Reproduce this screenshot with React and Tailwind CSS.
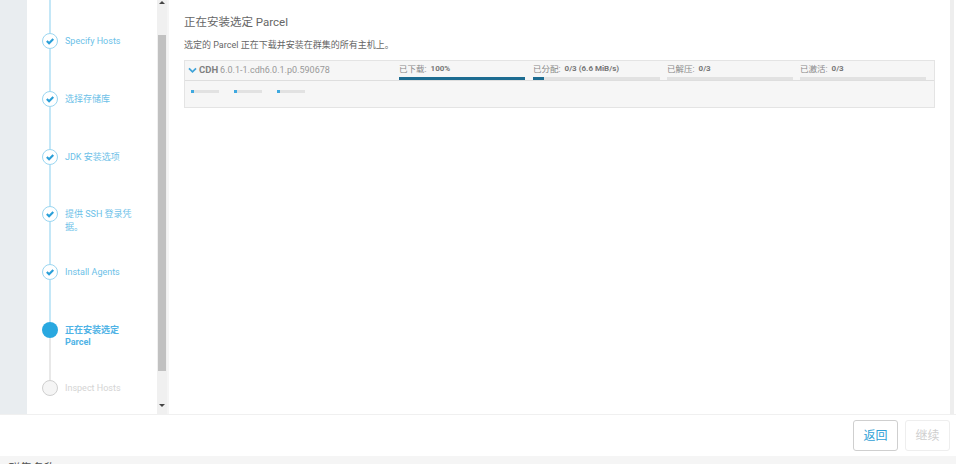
const completed = ["Specify Hosts", "选择存储库", "JDK 安装选项", "提供 SSH 登录凭据。", "Install Agents"];

function CheckStep({ label }) {
  return (
    <div className="flex h-[57.8px]">
      <div className="flex w-4 flex-col items-center">
        <div className="flex h-4 w-4 shrink-0 items-center justify-center rounded-full border border-[#9ad6f1] bg-white">
          <svg viewBox="0 0 12 12" className="h-[10px] w-[10px]" fill="none" stroke="#2a9fd8" strokeWidth="2.6">
            <path d="M2.2 6 L4.9 8.6 L9.9 3.6" />
          </svg>
        </div>
        <div className="w-0.5 flex-1 bg-[#c4e7f7]" />
      </div>
      <div className="ml-[7px] w-[68px] pt-[2px] text-[9px] leading-[12.5px] text-[#6cbfe8]">{label}</div>
    </div>
  );
}

function ProgressCol({ label, value, percent, width }) {
  return (
    <div className={width}>
      <div className="flex h-[16px] items-center gap-[4px] text-[8.5px] text-[#888]">
        <span>{label}</span>
        <span className="text-[8px] font-bold text-[#777]">{value}</span>
      </div>
      <div className="h-[3px] bg-[#e2e2e2]">
        <div className="h-full bg-[#1d6c91]" style={{ width: `${percent}%` }} />
      </div>
    </div>
  );
}

export default function App() {
  return (
    <div
      className="flex h-[464px] w-[956px] flex-col overflow-hidden bg-white"
      style={{ fontFamily: 'Roboto, "Noto Sans CJK SC", sans-serif' }}
    >
      <div className="flex h-[414px] shrink-0">
        <div className="w-[27px] shrink-0 bg-[#e9edf0]" />

        {/* Wizard steps */}
        <div className="w-[130px] shrink-0 bg-white pl-[15px]">
          <div className="ml-[7px] h-[33px] w-0.5 bg-[#c4e7f7]" />
          {completed.map((s) => (
            <CheckStep key={s} label={s} />
          ))}
          <div className="flex h-[57.8px]">
            <div className="flex w-4 flex-col items-center">
              <div className="h-4 w-4 shrink-0 rounded-full bg-[#29a8e0]" />
              <div className="w-0.5 flex-1 bg-[#e8e8e8]" />
            </div>
            <div className="ml-[7px] w-[62px] pt-[2px] text-[9px] font-bold leading-[12.5px] text-[#4fb3e6]">
              正在安装选定 Parcel
            </div>
          </div>
          <div className="flex">
            <div className="h-4 w-4 rounded-full border border-[#cfcfcf] bg-[#f5f5f5]" />
            <div className="ml-[7px] pt-[2px] text-[9px] leading-[12.5px] text-[#d4d4d4]">Inspect Hosts</div>
          </div>
        </div>

        {/* Scrollbar */}
        <div className="flex w-[10px] shrink-0 flex-col items-center bg-[#f0f0f0]">
          <div className="mt-[1px] h-0 w-0 border-x-[3px] border-b-[3px] border-x-transparent border-b-[#444]" />
          <div className="mt-[31px] h-[336px] w-2 shrink-0 bg-[#c1c1c1]" />
          <div className="mt-[33px] h-0 w-0 border-x-[3px] border-t-[3px] border-x-transparent border-t-[#444]" />
        </div>
        <div className="w-0.5 shrink-0 bg-[#f5f5f5]" />

        {/* Main */}
        <div className="w-[781px] shrink-0 bg-white px-[15px] pt-[14px]">
          <h1 className="text-[11.5px] font-normal leading-[16px] text-[#666]">正在安装选定 Parcel</h1>
          <p className="mt-[9px] text-[9px] leading-[12px] text-[#666]">选定的 Parcel 正在下载并安装在群集的所有主机上。</p>
          <div className="mt-[9px] h-[48px] w-[751px] border border-[#e4e4e4] bg-[#f6f6f6]">
            <div className="flex h-[20px] border-b border-[#dedede]">
              <div className="flex w-[214px] shrink-0 items-center pl-[3px] text-[9px] text-[#999]">
                <svg viewBox="0 0 10 8" className="mr-[2px] h-[7px] w-[9px]" fill="none" stroke="#3fa3d8" strokeWidth="2">
                  <path d="M1 1.5 L5 5.5 L9 1.5" />
                </svg>
                <span className="mr-[2px] text-[9.5px] font-bold text-[#808080]">CDH</span>
                6.0.1-1.cdh6.0.1.p0.590678
              </div>
              <ProgressCol label="已下载:" value="100%" percent={100} width="w-[126px] shrink-0" />
              <div className="w-2 shrink-0" />
              <ProgressCol label="已分配:" value="0/3 (6.6 MiB/s)" percent={9} width="w-[127px] shrink-0" />
              <div className="w-[7px] shrink-0" />
              <ProgressCol label="已解压:" value="0/3" percent={0} width="w-[126px] shrink-0" />
              <div className="w-[7px] shrink-0" />
              <ProgressCol label="已激活:" value="0/3" percent={0} width="w-[126px] shrink-0" />
            </div>
            <div className="flex gap-[15px] pl-[6px] pt-[9px]">
              {[0, 1, 2].map((i) => (
                <div key={i} className="h-[3px] w-[28px] bg-[#e2e2e2]">
                  <div className="h-full w-[3px] bg-[#3fa9e0]" />
                </div>
              ))}
            </div>
          </div>
        </div>
        <div className="w-1 shrink-0 bg-[#eeeeee]" />
      </div>

      {/* Footer */}
      <div className="flex h-[42px] shrink-0 items-center justify-end gap-[7px] border-t border-[#f0f0f0] bg-white pr-[6px]">
        <button className="h-[31px] w-[45px] rounded-[3px] border border-[#cfcfcf] bg-white text-[12px] text-[#2f9fd6]">返回</button>
        <button className="h-[31px] w-[45px] rounded-[3px] border border-[#eeeeee] bg-white text-[12px] text-[#cfcfcf]">继续</button>
      </div>
      <div className="h-2 overflow-hidden bg-[#f5f5f5] pl-[8px] pt-[6px] text-[12px] leading-[14px] text-[#555]">
        群集名称
      </div>
    </div>
  );
}
